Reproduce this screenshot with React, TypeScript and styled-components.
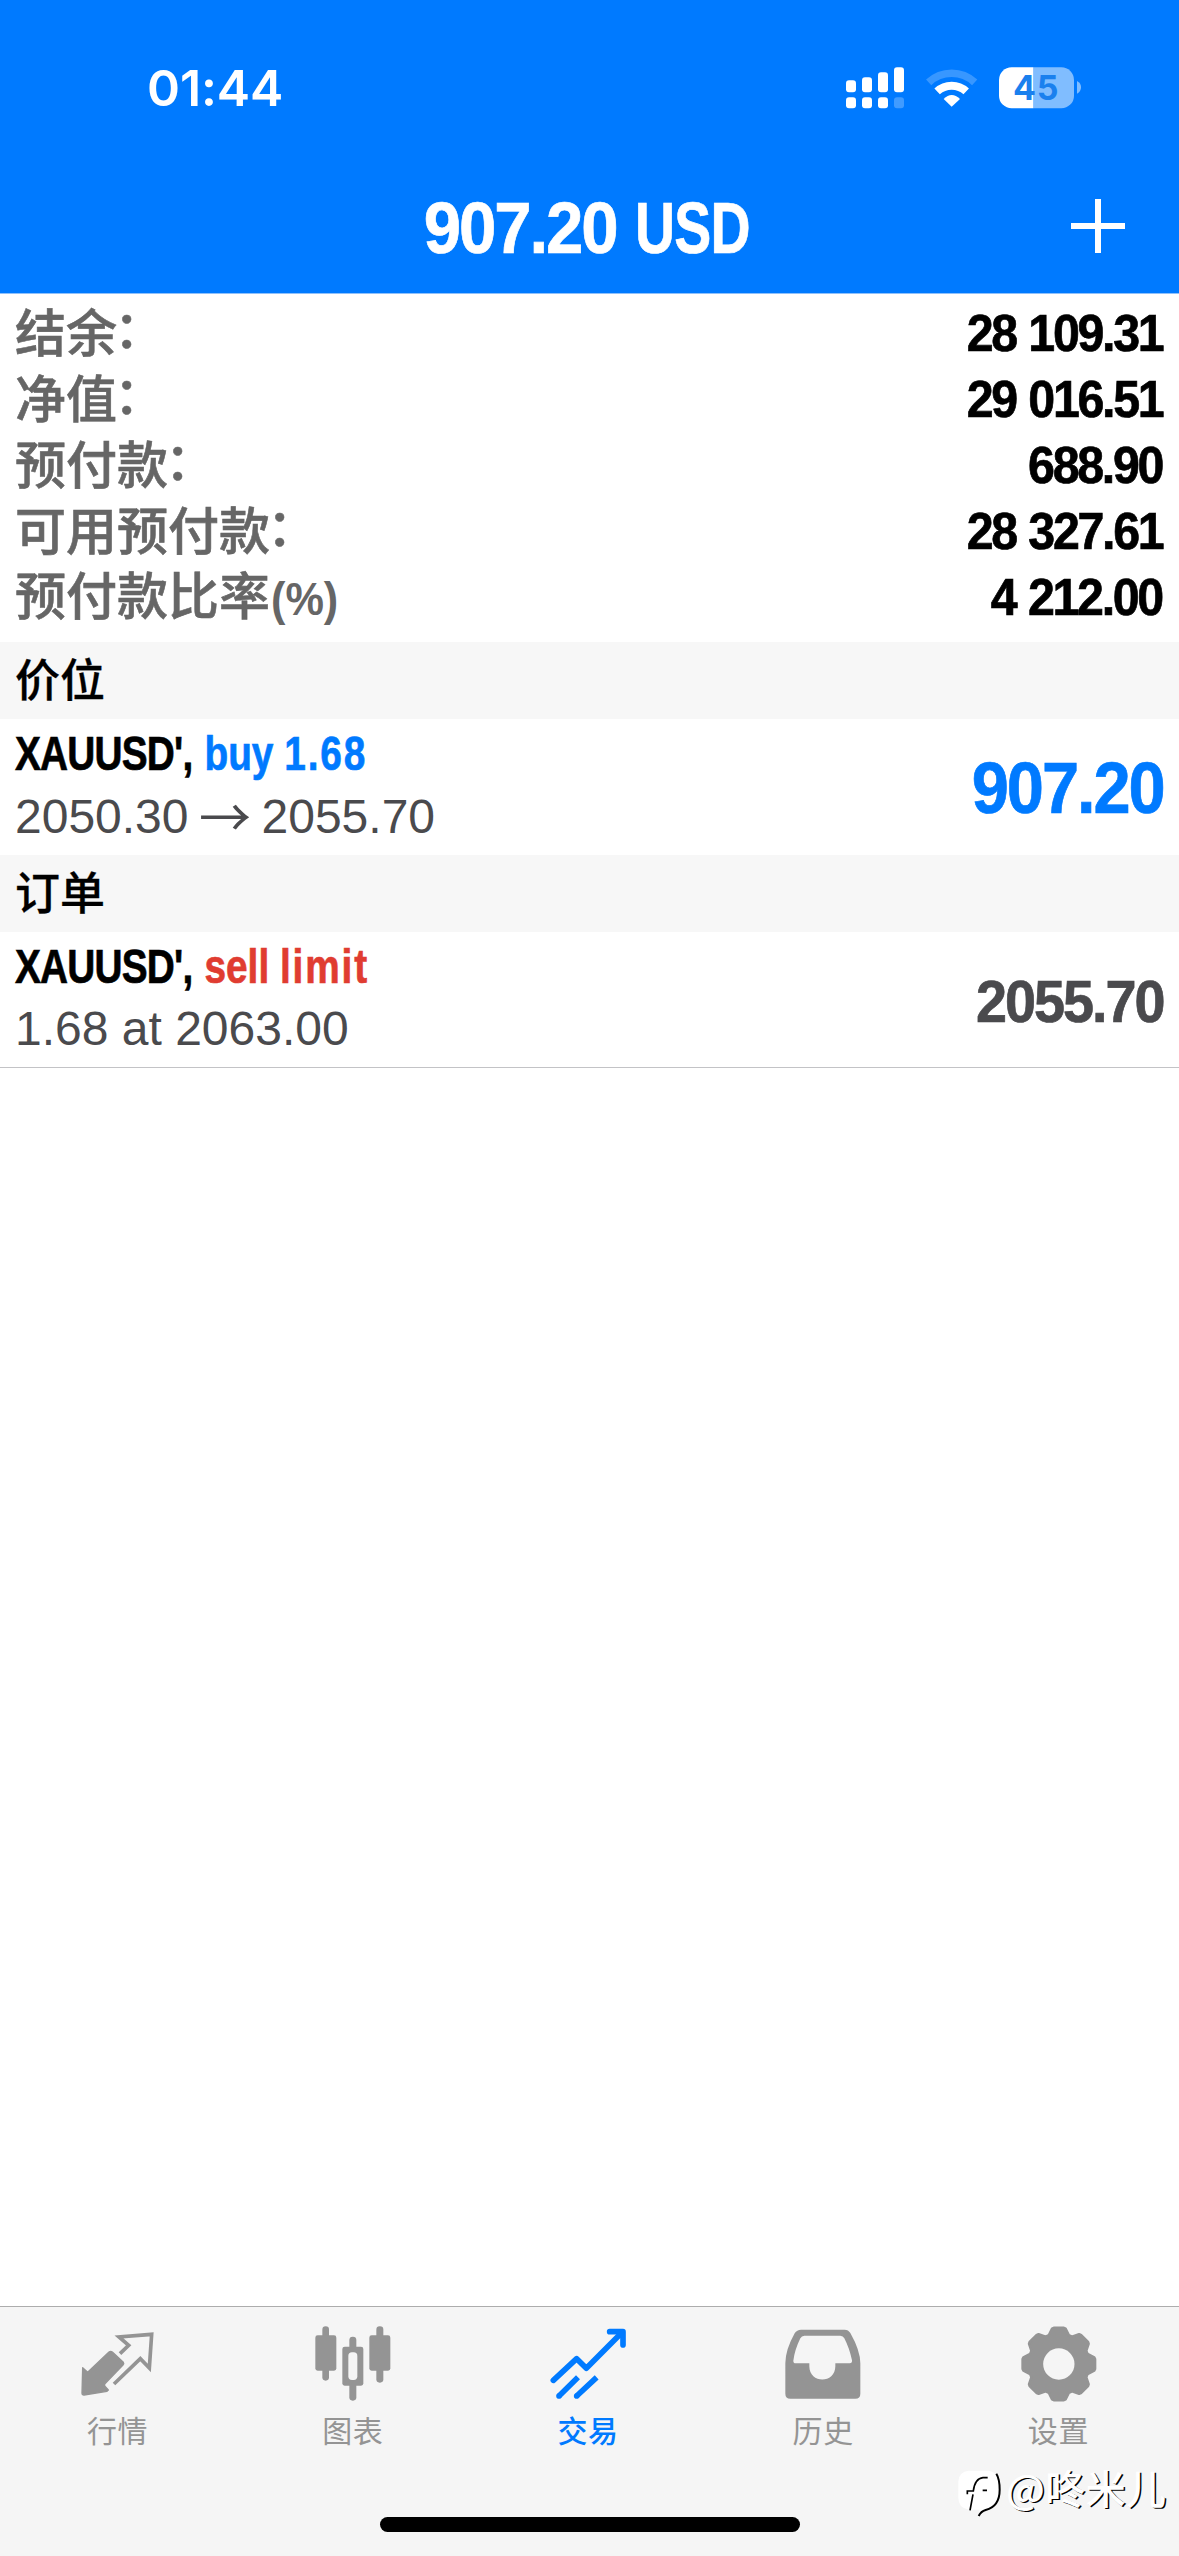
import React from 'react';
import styled, { createGlobalStyle } from 'styled-components';

const BLUE = '#007aff';
const GRAY = '#949494';
const LATIN = '"Liberation Sans", Arial, sans-serif';
const CJK = '"Noto Sans CJK SC", sans-serif';

const GlobalStyle = createGlobalStyle`
  * { box-sizing: border-box; }
  body { margin: 0; background: #fff; }
  svg { display: block; flex: none; }
`;

const Screen = styled.div`
  position: relative;
  display: flex;
  flex-direction: column;
  width: 1179px;
  height: 2556px;
  overflow: hidden;
  background: #fff;
  font-family: ${LATIN};
`;

const Header = styled.header`
  height: 294px;
  background: ${BLUE};
  border-bottom: 1px solid #8fc1fb;
  color: #fff;
`;

const StatusBar = styled.div`
  display: flex;
  align-items: center;
  justify-content: space-between;
  height: 175px;
  padding: 0 98px 0 147px;
`;

const Clock = styled.time`
  font: 600 50px/60px Inter, sans-serif;
  letter-spacing: -0.1px;
`;

const NavBar = styled.div`
  display: grid;
  grid-template-columns: 1fr auto 1fr;
  align-items: center;
  height: 106px;
  padding-right: 54px;
  padding-left: 68px;
`;

const Title = styled.h1`
  display: flex;
  gap: 18px;
  margin: 0;
`;

const AddButton = styled.button`
  justify-self: end;
  padding: 0;
  margin-top: -4px;
  border: 0;
  background: none;
`;

const Condensed = styled.span<{
  $size: number;
  $scale: number;
  $spacing: number;
  $origin: 'left' | 'right';
  $color?: string;
  $top?: number;
}>`
  display: block;
  margin-top: ${(p) => p.$top ?? 0}px;
  color: ${(p) => p.$color ?? 'inherit'};
  font-weight: 700;
  font-size: ${(p) => p.$size}px;
  line-height: 1.15;
  letter-spacing: ${(p) => p.$spacing}px;
  white-space: pre;
  -webkit-text-stroke: 0.7px currentColor;
  transform: scaleX(${(p) => p.$scale});
  transform-origin: ${(p) => p.$origin};
`;

const Summary = styled.dl`
  margin: 0;
  height: 348px;
  padding: 6px 17px 12px 15px;
`;

const SummaryRow = styled.div`
  display: flex;
  align-items: center;
  justify-content: space-between;
  height: 66px;
`;

const SummaryLabel = styled.dt`
  display: flex;
  align-items: baseline;
  color: #666;
  font: 500 51px/60px ${CJK};
  margin-top: -6px;
  -webkit-text-stroke: 0.6px currentColor;
`;

const Colon = styled.span`
  transform: translate(-3px, -4px);
`;

const Percent = styled.span`
  font: 700 46px/52px ${LATIN};
  -webkit-text-stroke: 0;
  transform: translateX(1px) scaleX(0.94);
  transform-origin: left;
`;

const SummaryValue = styled.dd`
  margin: 0;
  color: #000;
  word-spacing: 1.5px;
`;

const SectionTitle = styled.h2<{ $height: number }>`
  margin: 0;
  height: ${(p) => p.$height}px;
  padding: 0 15px;
  background: #f7f7f7;
  color: #000;
  font: 500 45px/72px ${CJK};
  -webkit-text-stroke: 0.3px currentColor;
`;

const Item = styled.article<{ $last?: boolean }>`
  display: flex;
  align-items: center;
  justify-content: space-between;
  height: 136px;
  padding: 0 16px 0 15px;
  border-bottom: ${(p) => (p.$last ? '1px solid #c3c3c6' : '0')};
`;

const ItemText = styled.div`
  display: flex;
  flex-direction: column;
  gap: 7px;
  margin-top: -3px;
`;

const Side = styled.span<{ $color: string }>`
  color: ${(p) => p.$color};
  margin-left: 15px;
  letter-spacing: 0;
`;

const Loose = styled.span`
  letter-spacing: 2.3px;
`;

const Detail = styled.div`
  display: flex;
  color: #4a4a4d;
  font-size: 48px;
  line-height: 56px;
  white-space: pre;
`;

const Arrow = styled.span`
  width: 73px;
  text-align: center;
  font-family: ${CJK};
  font-weight: 400;
  font-size: 52px;
  line-height: 52px;
`;

const Spacer = styled.div`
  flex: 1;
`;

const TabBar = styled.nav`
  display: flex;
  height: 250px;
  padding: 17px 3px 0 0;
  border-top: 1px solid #adadad;
  background: #f5f5f5;
`;

const Tab = styled.div<{ $active?: boolean }>`
  flex: 1;
  display: flex;
  flex-direction: column;
  align-items: center;
  color: ${(p) => (p.$active ? BLUE : GRAY)};
  font: ${(p) => (p.$active ? 500 : 400)} 30px/44px ${CJK};
  letter-spacing: 0.6px;
`;

const TabLabel = styled.span`
  margin-top: 3px;
`;

const HomeIndicator = styled.div`
  position: absolute;
  left: 380px;
  top: 2517px;
  width: 420px;
  height: 15px;
  border-radius: 8px;
  background: #000;
`;

const Watermark = styled.div`
  position: absolute;
  left: 955px;
  top: 2467px;
  display: flex;
  align-items: flex-start;
  color: #fff;
  font: 500 40px/40px ${CJK};
  letter-spacing: 0.4px;
  text-shadow: 1.5px 1px 0 #000;
  white-space: nowrap;
`;

const StatusIcons = () => {
  const bars = [
    [198, 120],
    [246, 111],
    [294, 96],
    [342, 81],
  ];
  return (
    <svg width="235" height="42" viewBox="198 80 705 126" fill="#fff">
      {bars.map(([x, y], i) => (
        <g key={x}>
          <rect x={x} y={y} width="30" height={156 - y} rx="9" />
          <rect x={x} y="171" width="30" height="33" rx="9" opacity={i === 3 ? 0.25 : 1} />
        </g>
      ))}
      <path d="M446 126A101 101 0 0 1 584 126" fill="none" stroke="#fff" strokeWidth="23" opacity=".22" />
      <path d="M471.4 153.2A64 64 0 0 1 558.6 153.2" fill="none" stroke="#fff" strokeWidth="24" />
      <path d="M515 199L491 176Q515 152 540 176Z" />
      <path d="M760 81H695A38 38 0 0 0 657 119V166A38 38 0 0 0 695 204H760Z" />
      <path d="M760 81H844A38 38 0 0 1 882 119V166A38 38 0 0 1 844 204H760Z" opacity=".5" />
      <path d="M891 122Q903 128 903 141Q903 154 891 160Z" opacity=".5" />
      <text
        x="768"
        y="180"
        fill="#1a80ee"
        textAnchor="middle"
        fontFamily="Inter, sans-serif"
        fontWeight="700"
        fontSize="102"
        letterSpacing="2"
      >
        45
      </text>
    </svg>
  );
};

const QuotesIcon = () => (
  <svg width="80" height="80" viewBox="113 100 240 240" fill="currentColor">
    <path
      d="M127 231L142 245L206 184Q211 180 216 184L249 215Q252 219 248 223L193 280V286L204 298L200 302L131 313Q125 313 125 307Z"
      stroke="currentColor"
      strokeWidth="4"
      strokeLinejoin="round"
    />
    <path d="M239 189L265 164L236 139L334 131L327 232L300 204L221 280" fill="none" stroke="currentColor" strokeWidth="11" />
  </svg>
);

const ChartIcon = () => (
  <svg width="80" height="80" viewBox="818 100 240 240" fill="currentColor">
    <rect x="846" y="107" width="20" height="163" rx="10" />
    <rect x="825" y="134" width="63" height="106" rx="7" />
    <rect x="1008" y="107" width="21" height="169" rx="10" />
    <rect x="987" y="134" width="63" height="106" rx="7" />
    <rect x="927" y="138" width="21" height="60" rx="10" />
    <rect x="927" y="260" width="21" height="70" rx="10" />
    <rect x="906" y="168" width="63" height="117" rx="7" />
    <rect x="924" y="185" width="27" height="83" rx="11" fill="#f5f5f5" />
  </svg>
);

const TradeIcon = () => (
  <svg width="80" height="80" viewBox="145 100 240 240" fill="none" stroke="currentColor" strokeWidth="17" strokeLinejoin="round">
    <path d="M161 269L231 204L260 233L366 126" strokeLinecap="round" />
    <path d="M330 123H370V163" strokeLinecap="round" />
    <path d="M350 123H370V143Z" fill="currentColor" strokeWidth="8" />
    <path d="M178 316L235 260M231 316L291 260" />
    <circle cx="178" cy="316" r="8.5" fill="currentColor" stroke="none" />
    <circle cx="231" cy="316" r="8.5" fill="currentColor" stroke="none" />
  </svg>
);

const HistoryIcon = () => (
  <svg width="80" height="80" viewBox="851 100 240 240" fill="currentColor">
    <path
      fillRule="evenodd"
      d="M905 117H1036Q1047 117 1053 127Q1083 180 1083 218V309Q1083 324 1068 324H873Q858 324 858 309V218Q858 178 886 128Q893 117 905 117ZM915 135Q907 135 903 143Q886 178 882 210Q882 218 889 218H930V227C930 280 1008 280 1008 227V218H1051Q1059 218 1058 209Q1050 172 1035 143Q1031 135 1023 135Z"
    />
  </svg>
);

const gearPath = (() => {
  const tooth: [number, number][] = [
    [-30, 86],
    [-20, 106],
    [-15, 108.5],
    [15, 108.5],
    [20, 106],
    [30, 86],
  ];
  const points: string[] = [];
  for (let k = 0; k < 8; k++) {
    const a = (k * Math.PI) / 4;
    tooth.forEach(([t, r]) => {
      const x = 478.5 + t * Math.cos(a) + r * Math.sin(a);
      const y = 220 - r * Math.cos(a) + t * Math.sin(a);
      points.push(`${x.toFixed(1)} ${y.toFixed(1)}`);
    });
  }
  return `M${points.join('L')}Z`;
})();

const SettingsIcon = () => (
  <svg width="80" height="80" viewBox="356 100 240 240" fill="currentColor">
    <path d={gearPath} stroke="currentColor" strokeWidth="8" strokeLinejoin="round" />
    <circle cx="478.5" cy="220" r="47" fill="#f5f5f5" />
  </svg>
);

const WatermarkLogo = () => (
  <svg width="51" height="54" viewBox="164 532 153 162" fill="none" stroke="#000" strokeWidth="6">
    <path
      d="M205 543H265Q299 548 299 600Q299 650 255 662L235 678L238 660H205Q174 655 174 625V575Q176 546 205 543Z"
      fill="#fff"
      stroke="none"
    />
    <path d="M288 552Q298 568 298 600Q298 650 256 661Q242 665 235 679" />
    <path d="M201 614V604H219Q224 566 248 564H262M218 614L209 662M247 602H260" strokeWidth="5" />
  </svg>
);

const summary = [
  { label: '结余', suffix: '：', value: '28 109.31' },
  { label: '净值', suffix: '：', value: '29 016.51' },
  { label: '预付款', suffix: '：', value: '688.90' },
  { label: '可用预付款', suffix: '：', value: '28 327.61' },
  { label: '预付款比率', suffix: '(%)', value: '4 212.00' },
];

const tabs = [
  { label: '行情', Icon: QuotesIcon },
  { label: '图表', Icon: ChartIcon },
  { label: '交易', Icon: TradeIcon, active: true },
  { label: '历史', Icon: HistoryIcon },
  { label: '设置', Icon: SettingsIcon },
];

export default function App() {
  return (
    <Screen>
      <GlobalStyle />
      <Header>
        <StatusBar>
          <Clock>01:44</Clock>
          <StatusIcons />
        </StatusBar>
        <NavBar>
          <span />
          <Title>
            <Condensed $size={73} $scale={0.92} $spacing={-2.3} $origin="right">
              907.20
            </Condensed>
            <Condensed $size={73} $scale={0.76} $spacing={-1} $origin="left">
              USD
            </Condensed>
          </Title>
          <AddButton aria-label="add">
            <svg width="54" height="54" viewBox="0 0 54 54" fill="#fff">
              <path d="M24 0h6v24h24v6H30v24h-6V30H0v-6h24z" />
            </svg>
          </AddButton>
        </NavBar>
      </Header>

      <Summary>
        {summary.map(({ label, suffix, value }) => (
          <SummaryRow key={label}>
            <SummaryLabel>
              {label}
              {suffix === '：' ? <Colon>{suffix}</Colon> : <Percent>{suffix}</Percent>}
            </SummaryLabel>
            <SummaryValue>
              <Condensed $size={52} $scale={0.93} $spacing={-2.5} $origin="right" $top={2}>
                {value}
              </Condensed>
            </SummaryValue>
          </SummaryRow>
        ))}
      </Summary>

      <SectionTitle $height={77}>价位</SectionTitle>
      <Item>
        <ItemText>
          <Condensed $size={48.5} $scale={0.8} $spacing={-1} $origin="left">
            XAUUSD',
            <Side $color={BLUE}>
              buy <Loose>1.68</Loose>
            </Side>
          </Condensed>
          <Detail>
            2050.30<Arrow>→</Arrow>2055.70
          </Detail>
        </ItemText>
        <Condensed $size={73} $scale={0.915} $spacing={-2.3} $origin="right" $color={BLUE} $top={2}>
          907.20
        </Condensed>
      </Item>

      <SectionTitle $height={77}>订单</SectionTitle>
      <Item $last>
        <ItemText>
          <Condensed $size={48.5} $scale={0.8} $spacing={-1} $origin="left">
            XAUUSD',
            <Side $color="#e03c31">
              sell <Loose>limit</Loose>
            </Side>
          </Condensed>
          <Detail>1.68 at 2063.00</Detail>
        </ItemText>
        <Condensed $size={60} $scale={0.93} $spacing={-2.2} $origin="right" $color="#4a4a4d" $top={4}>
          2055.70
        </Condensed>
      </Item>

      <Spacer />

      <TabBar>
        {tabs.map(({ label, Icon, active }) => (
          <Tab key={label} $active={active}>
            <Icon />
            <TabLabel>{label}</TabLabel>
          </Tab>
        ))}
      </TabBar>

      <HomeIndicator />
      <Watermark>
        <WatermarkLogo />
        @咚米儿
      </Watermark>
    </Screen>
  );
}
